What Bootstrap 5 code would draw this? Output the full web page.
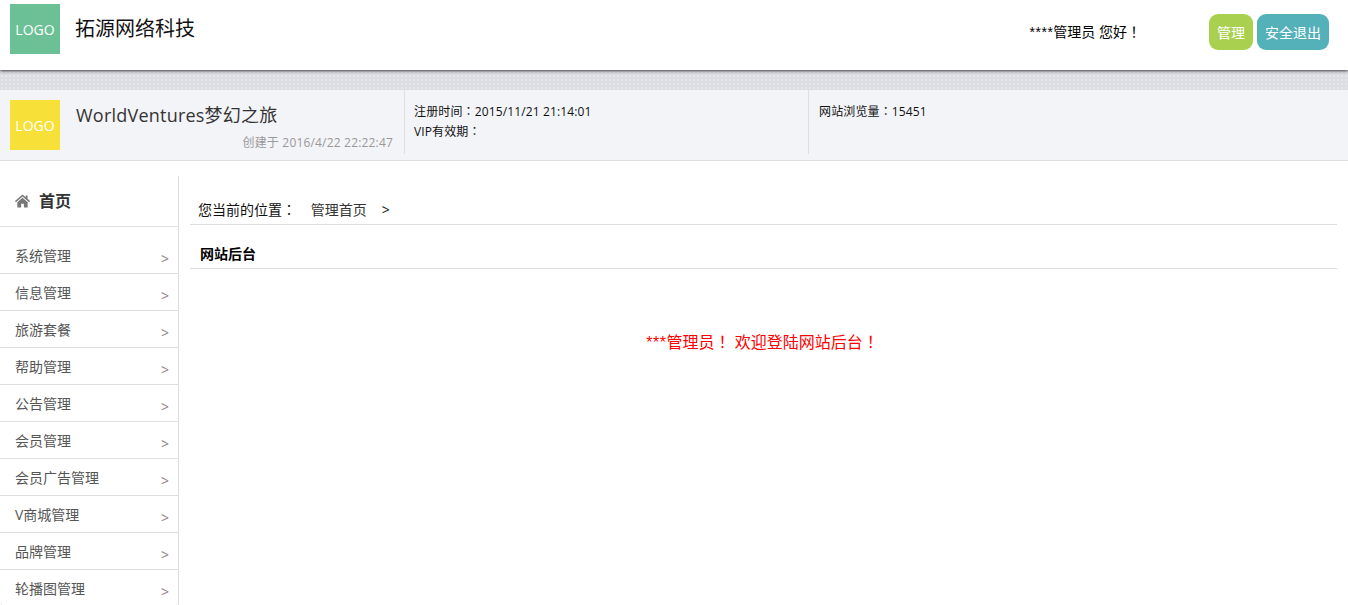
<!DOCTYPE html>
<html lang="zh-CN">
<head>
<meta charset="utf-8">
<title>拓源网络科技</title>
<link href="https://cdn.jsdelivr.net/npm/bootstrap@5.3.0/dist/css/bootstrap.min.css" rel="stylesheet">
<style>
html,body{height:100%;overflow:hidden}
body{font-family:"Open Sans","Noto Sans CJK SC",sans-serif;font-size:13px;color:#000;background:#fff}
.pct{font-family:"Noto Sans CJK TC",sans-serif;font-feature-settings:"locl" 0}
.stars{font-family:"Liberation Sans",sans-serif;letter-spacing:.5px}
.top-bar{height:70px;padding-left:10px;position:relative;z-index:2;box-shadow:0 1px 3px rgba(0,0,0,.75);background:#fff}
.logo-box{width:50px;height:50px;color:#fff;font-size:14px;flex:none}
.logo-green{background:#6bc195;margin-top:4px}
.logo-yellow{background:#f7e038}
.site-name{font-size:20px;line-height:28px;margin:15px 0 0 15px;color:#111}
.greeting{font-size:14px;margin:0 64px 0 0}
.act-btn{height:36px;border-radius:9px;color:#fff;font-size:14px;border:0;padding:0;margin-left:4px}
.act-btn:hover{color:#fff}
.btn-manage{width:44px;background:#a9d14f}
.btn-logout{width:72px;background:#54b0b9}
.action-wrap{padding:14px 19px 0 0}
.dots{height:20px;background-color:#dcdde3;background-image:radial-gradient(#e6e7eb 1px,transparent 1px);background-size:4px 4px}
.info-strip{height:71px;background:#f3f4f8;border-bottom:1px solid #dedede;padding-left:10px}
.info-main{width:394px;padding-top:10px}
.info-title{margin-left:16px;flex:1}
.info-title h1{font-size:18px;font-weight:400;line-height:26px;color:#333;margin:2px 0 0;letter-spacing:.22px}
.created{font-size:12px;color:#999;text-align:right;margin:6px 11px 0 0;line-height:18px;letter-spacing:.18px}
.info-col{height:64px;border-left:1px solid #dedede;padding:11px 0 0 9px;font-size:12px;line-height:19px;color:#111;letter-spacing:.13px}
.col-reg{width:404px}
.col-view{flex:1;padding-left:10px}
.page-body{height:444px;padding-top:15px}
.side{width:179px;flex:none;border-right:1px solid #dedede}
.side-home{height:51px;padding:0 0 0 15px;border-bottom:1px solid #dedede;font-size:16px;font-weight:700;color:#333;margin-bottom:10px}
.home-glyph{margin-right:9px}
.side-item{height:37px;padding:8px 9px 0 15px;border:0;border-bottom:1px solid #dedede;font-size:14px;line-height:22px;color:#555;border-radius:0;background:none}
.side-arrow{color:#8f7f82;font-size:14px;margin-top:3px}
.main-pane{flex:1;padding:0 11px}
.crumb{height:34px;margin-top:15px;padding:8px 0 0 8px;border-bottom:1px solid #dedede;line-height:20px;color:#111;font-size:14px}
.crumb-link{margin-left:11px;color:#333}
.crumb-sep{margin-left:15px}
.panel-head{height:44px;padding:19px 0 0 10px;border-bottom:1px solid #dedede;font-weight:700;line-height:20px;font-size:14px}
.welcome{color:#f00;font-size:16px;text-align:center;padding-top:60px;line-height:24px;padding-right:2px}
</style>
</head>
<body>
<header class="top-bar d-flex">
  <div class="logo-box logo-green d-flex align-items-center justify-content-center">LOGO</div>
  <div class="site-name">拓源网络科技</div>
  <div class="ms-auto d-flex action-wrap align-items-center align-self-start">
    <span class="greeting"><span class="stars">****</span>管理员 您好<span class="pct">！</span></span>
    <a class="btn act-btn btn-manage d-flex align-items-center justify-content-center" href="#">管理</a>
    <a class="btn act-btn btn-logout d-flex align-items-center justify-content-center" href="#">安全退出</a>
  </div>
</header>
<div class="dots"></div>
<section class="info-strip d-flex">
  <div class="info-main d-flex">
    <div class="logo-box logo-yellow d-flex align-items-center justify-content-center">LOGO</div>
    <div class="info-title">
      <h1>WorldVentures梦幻之旅</h1>
      <div class="created">创建于 2016/4/22 22:22:47</div>
    </div>
  </div>
  <div class="info-col col-reg">注册时间<span class="pct">：</span>2015/11/21 21:14:01<br>VIP有效期<span class="pct">：</span></div>
  <div class="info-col col-view">网站浏览量<span class="pct">：</span>15451</div>
</section>
<div class="page-body d-flex">
  <nav class="side">
    <div class="side-home d-flex align-items-center">
      <svg width="15" height="14" viewBox="0 0 16 14" class="home-glyph" aria-hidden="true"><path fill="#777" d="M8 0 0 7l1 1.2L8 2.2l7 6L16 7l-2.600-2.300V1h-2v2L8 0Zm0 3.500L2.500 8.200V14h4v-4h3v4h4V8.200L8 3.500Z"/></svg>
      <span>首页</span>
    </div>
    <div class="list-group">
      <a class="list-group-item side-item d-flex justify-content-between" href="#"><span>系统管理</span><span class="side-arrow">&gt;</span></a>
      <a class="list-group-item side-item d-flex justify-content-between" href="#"><span>信息管理</span><span class="side-arrow">&gt;</span></a>
      <a class="list-group-item side-item d-flex justify-content-between" href="#"><span>旅游套餐</span><span class="side-arrow">&gt;</span></a>
      <a class="list-group-item side-item d-flex justify-content-between" href="#"><span>帮助管理</span><span class="side-arrow">&gt;</span></a>
      <a class="list-group-item side-item d-flex justify-content-between" href="#"><span>公告管理</span><span class="side-arrow">&gt;</span></a>
      <a class="list-group-item side-item d-flex justify-content-between" href="#"><span>会员管理</span><span class="side-arrow">&gt;</span></a>
      <a class="list-group-item side-item d-flex justify-content-between" href="#"><span>会员广告管理</span><span class="side-arrow">&gt;</span></a>
      <a class="list-group-item side-item d-flex justify-content-between" href="#"><span>V商城管理</span><span class="side-arrow">&gt;</span></a>
      <a class="list-group-item side-item d-flex justify-content-between" href="#"><span>品牌管理</span><span class="side-arrow">&gt;</span></a>
      <a class="list-group-item side-item d-flex justify-content-between" href="#"><span>轮播图管理</span><span class="side-arrow">&gt;</span></a>
    </div>
  </nav>
  <main class="main-pane">
    <div class="crumb">您当前的位置<span class="pct">：</span> <span class="crumb-link">管理首页</span><span class="crumb-sep">&gt;</span></div>
    <div class="panel-head">网站后台</div>
    <div class="welcome"><span class="stars">***</span>管理员<span class="pct">！</span> 欢迎登陆网站后台<span class="pct">！</span></div>
  </main>
</div>
<script src="https://cdn.jsdelivr.net/npm/bootstrap@5.3.0/dist/js/bootstrap.bundle.min.js"></script>
</body>
</html>
